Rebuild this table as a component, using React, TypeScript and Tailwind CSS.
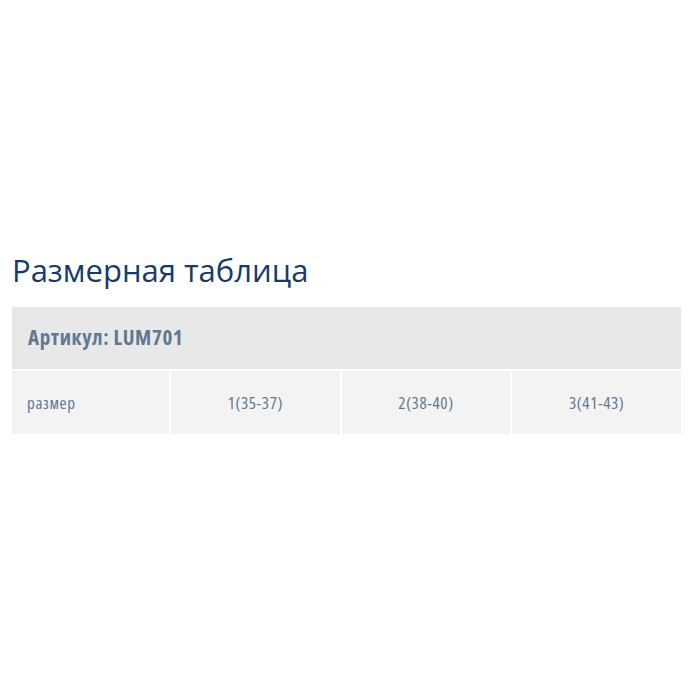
const cols = ['1(35-37)', '2(38-40)', '3(41-43)'];

export default function App() {
  return (
    <div className="w-[700px] h-[700px] bg-white" style={{ fontFamily: '"Open Sans", sans-serif' }}>
      <div className="pt-[250px] pl-[12px] w-[681px]">
        <h2 className="text-[31px] leading-[40px] text-[#183a6b] mb-[17px]">Размерная таблица</h2>
        <div className="flex flex-col gap-[2px] text-[#627892] [font-stretch:75%]">
          {/* header */}
          <div className="h-[62px] bg-[#e8e8e8] flex items-center pl-[16px] text-[21px] font-bold tracking-[0.6px]">
            Артикул: LUM701
          </div>
          {/* sizes row */}
          <div className="grid grid-cols-[157px_1fr_1fr_1fr] gap-[2px] text-[17px] tracking-[0.6px]">
            <div className="h-[63px] bg-[#f3f3f3] flex items-center pl-[15px]">размер</div>
            {cols.map((c) => (
              <div key={c} className="h-[63px] bg-[#f3f3f3] flex items-center justify-center">
                {c}
              </div>
            ))}
          </div>
        </div>
      </div>
    </div>
  );
}
